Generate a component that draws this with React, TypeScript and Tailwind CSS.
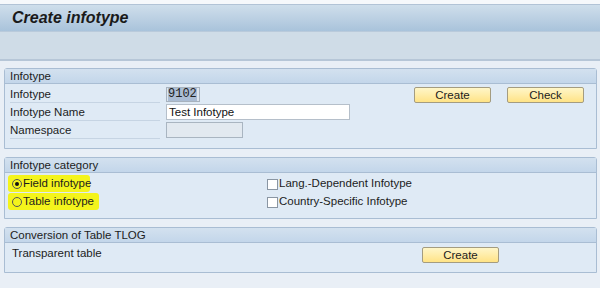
import React from 'react';

const font = { fontFamily: '"Liberation Sans", Arial, sans-serif' };

function GroupBox({ title, children, className = '' }: { title: string; children: React.ReactNode; className?: string }) {
  return (
    <div className={`border border-[#a9bdd3] rounded-t-[3px] bg-[#dfeaf5] ${className}`}>
      <div className="h-[15px] bg-gradient-to-b from-[#d3e1ef] to-[#c3d6ea] border-b border-[#a9bdd3] pl-[5px] text-[11.5px] leading-[15px] text-[#1c1c1c]">
        {title}
      </div>
      {children}
    </div>
  );
}

function SapButton({ label }: { label: string }) {
  return (
    <button className="w-[77px] h-[16px] rounded-[2px] border border-[#a49c80] bg-gradient-to-b from-[#fff6c8] to-[#ffe385] text-[11.5px] leading-[14px] text-[#1c1c1c]">
      {label}
    </button>
  );
}

function Row({ label, children }: { label: string; children?: React.ReactNode }) {
  return (
    <div className="flex items-center h-[18px]">
      <div className="ml-[5px] w-[150px] h-[18px] border-b border-[#c6d4e3] text-[11.5px] leading-[18px] text-[#1c1c1c]">
        {label}
      </div>
      {children}
    </div>
  );
}

function Radio({ checked, label, width }: { checked?: boolean; label: string; width: string }) {
  return (
    <div className={`flex items-center h-[17px] ml-[3px] pl-[4px] bg-[#f4f41c] rounded-[3px] whitespace-nowrap ${width}`}>
      <span className="shrink-0 w-[10px] h-[10px] rounded-full border border-[#555] flex items-center justify-center">
        {checked && <span className="w-[4px] h-[4px] rounded-full bg-[#111]" />}
      </span>
      <span className="ml-[1px] text-[11.5px] text-[#1c1c1c]">{label}</span>
    </div>
  );
}

function Check({ label }: { label: string }) {
  return (
    <div className="flex items-center h-[18px] whitespace-nowrap">
      <span className="shrink-0 w-[11px] h-[11px] border border-[#8a96a3] bg-white" />
      <span className="ml-[1px] text-[11.5px] text-[#1c1c1c]">{label}</span>
    </div>
  );
}

export default function App() {
  return (
    <div className="w-[600px] h-[288px] bg-[#e9eff6] overflow-hidden" style={font}>
      <div className="h-[5px] bg-[#f6f8fb] border-b border-[#b2c3d6]" />
      <div className="h-[27px] bg-gradient-to-b from-[#cfdeeb] to-[#a9c3db] border-b border-[#b9cadb] pl-[12px] flex items-center">
        <span className="text-[16px] font-bold italic text-[#1a1a1a]">Create infotype</span>
      </div>
      <div className="h-[29px] bg-[#cfdce7] border-b-2 border-[#b6c6d7]" />

      <div className="px-[4px] pr-[3px] pt-[7px] flex flex-col gap-[8px]">
        <GroupBox title="Infotype" className="h-[81px]">
          <div className="pt-[1px]">
            <Row label="Infotype">
              <div className="ml-[6px] w-[34px] h-[15px] border border-[#a7b2be] bg-[#dde5ee] flex items-center pl-[1px]">
                <span className="bg-[#abbdd4] text-[12px] leading-[13px] text-[#222]" style={{ fontFamily: '"Liberation Mono", monospace' }}>9102</span>
              </div>
              <div className="ml-[214px]"><SapButton label="Create" /></div>
              <div className="ml-[16px]"><SapButton label="Check" /></div>
            </Row>
            <Row label="Infotype Name">
              <div className="ml-[6px] w-[184px] h-[16px] border border-[#b5bfca] bg-white text-[11.5px] leading-[14px] pl-[2px] text-[#111]">
                Test Infotype
              </div>
            </Row>
            <Row label="Namespace">
              <div className="ml-[6px] w-[77px] h-[16px] border border-[#a9b5c1] bg-[#e2e9f0]" />
            </Row>
          </div>
        </GroupBox>

        <GroupBox title="Infotype category" className="h-[62px]">
          <div className="grid grid-cols-[262px_1fr] pt-[2px]">
            <div className="flex flex-col gap-[1px]">
              <Radio checked label="Field infotype" width="w-[82px]" />
              <Radio label="Table infotype" width="w-[91px]" />
            </div>
            <div className="flex flex-col">
              <Check label="Lang.-Dependent Infotype" />
              <Check label="Country-Specific Infotype" />
            </div>
          </div>
        </GroupBox>

        <GroupBox title="Conversion of Table TLOG" className="h-[46px]">
          <div className="flex items-center h-[18px] mt-[2px]">
            <div className="ml-[7px] w-[150px] text-[11.5px] text-[#1c1c1c]">Transparent table</div>
            <div className="ml-[260px]"><SapButton label="Create" /></div>
          </div>
        </GroupBox>
      </div>
    </div>
  );
}
